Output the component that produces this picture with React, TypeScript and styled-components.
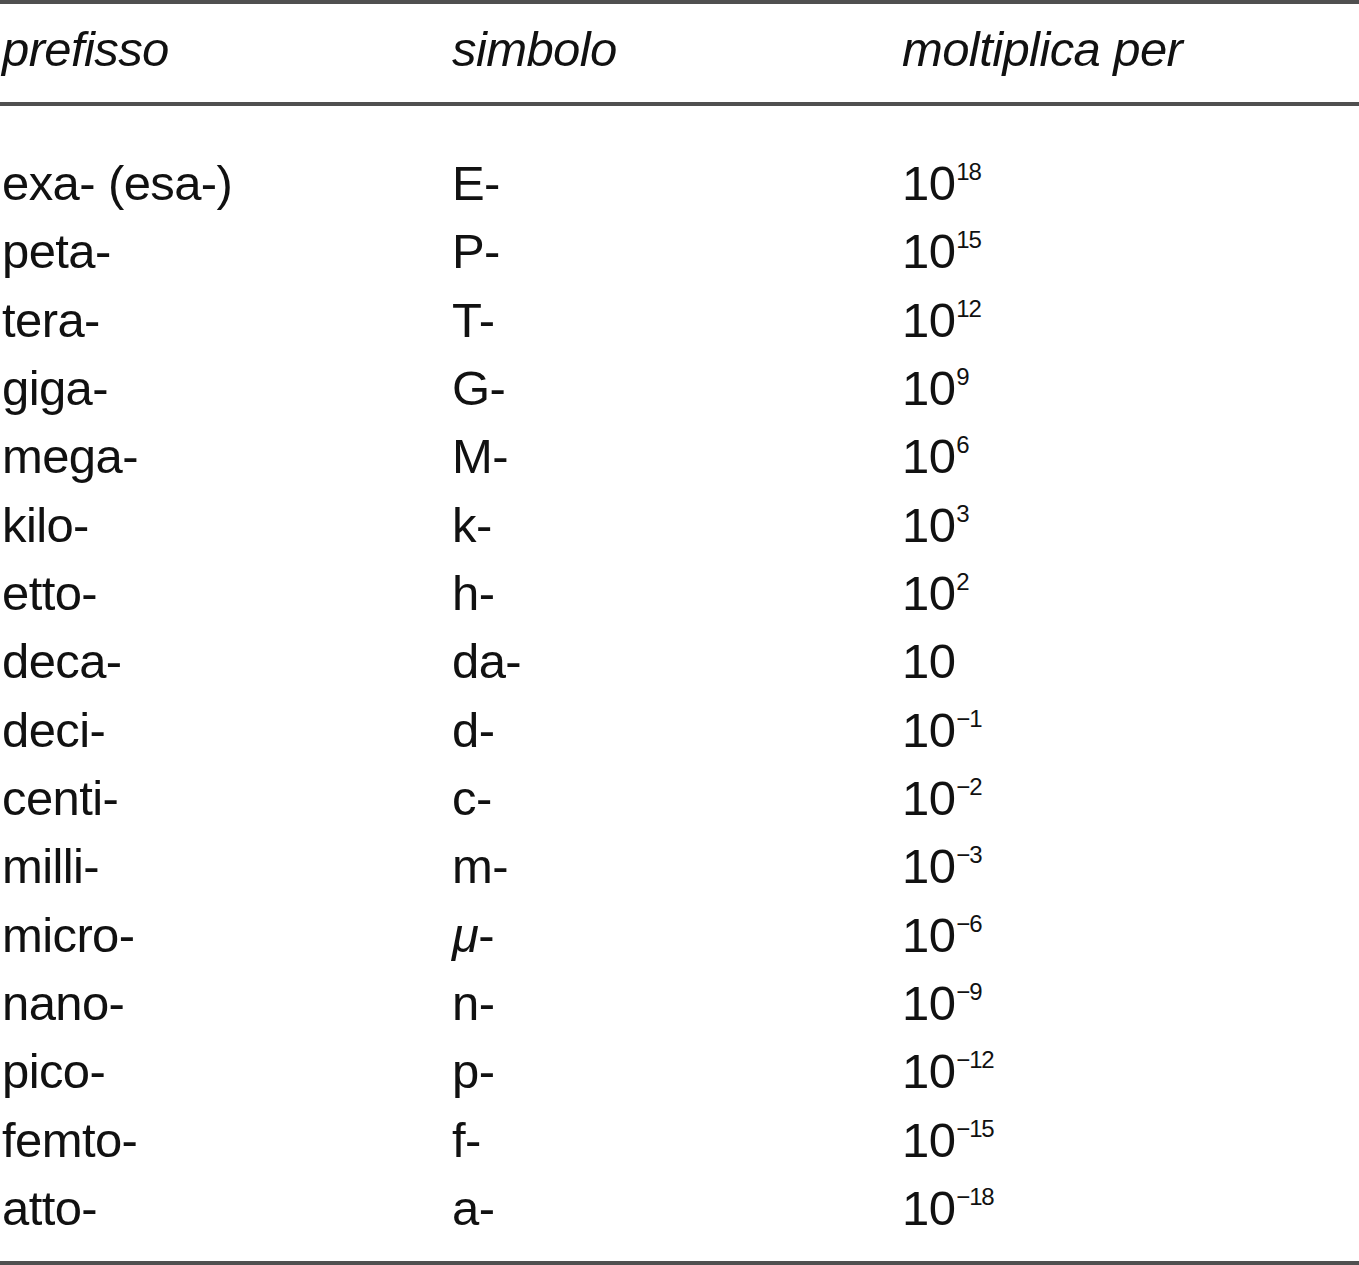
import React from "react";
import styled, { createGlobalStyle } from "styled-components";

const Global = createGlobalStyle`
  html, body { margin: 0; padding: 0; background: #ffffff; }
  body { font-family: "Liberation Sans", Arial, Helvetica, sans-serif; color: #111111; }
`;

const Table = styled.div`
  width: 1359px;
  border-top: 4px solid #505050;
  border-bottom: 4px solid #505050;
`;

const HeaderRow = styled.div`
  display: grid;
  grid-template-columns: 450px 450px 1fr;
  height: 102px;
  box-sizing: border-box;
  padding-top: 15px;
  border-bottom: 4px solid #505050;
`;

const HeadCell = styled.div`
  font-size: 49px;
  line-height: 60px;
  font-style: italic;
  letter-spacing: -0.6px;
  padding-left: 2px;
`;

const Body = styled.div`
  padding: 43px 0 19px;
`;

const Row = styled.div`
  display: grid;
  grid-template-columns: 450px 450px 1fr;
  height: 68.33px;
`;

const Cell = styled.div`
  font-size: 49px;
  line-height: 68.33px;
  letter-spacing: -0.6px;
  white-space: nowrap;
  padding-left: 2px;
`;

const Sup = styled.span`
  font-size: 24px;
  letter-spacing: -1.2px;
  line-height: 0;
  vertical-align: 20px;
  margin-left: 1px;
`;

const Greek = styled.span`
  font-style: italic;
`;

type Item = { prefix: string; symbol: React.ReactNode; exp: string | null };

const rows: Item[] = [
  { prefix: "exa- (esa-)", symbol: "E-", exp: "18" },
  { prefix: "peta-", symbol: "P-", exp: "15" },
  { prefix: "tera-", symbol: "T-", exp: "12" },
  { prefix: "giga-", symbol: "G-", exp: "9" },
  { prefix: "mega-", symbol: "M-", exp: "6" },
  { prefix: "kilo-", symbol: "k-", exp: "3" },
  { prefix: "etto-", symbol: "h-", exp: "2" },
  { prefix: "deca-", symbol: "da-", exp: null },
  { prefix: "deci-", symbol: "d-", exp: "\u22121" },
  { prefix: "centi-", symbol: "c-", exp: "\u22122" },
  { prefix: "milli-", symbol: "m-", exp: "\u22123" },
  { prefix: "micro-", symbol: <><Greek>μ</Greek>-</>, exp: "\u22126" },
  { prefix: "nano-", symbol: "n-", exp: "\u22129" },
  { prefix: "pico-", symbol: "p-", exp: "\u221212" },
  { prefix: "femto-", symbol: "f-", exp: "\u221215" },
  { prefix: "atto-", symbol: "a-", exp: "\u221218" },
];

export default function App() {
  return (
    <>
      <Global />
      <Table>
        <HeaderRow>
          <HeadCell>prefisso</HeadCell>
          <HeadCell>simbolo</HeadCell>
          <HeadCell>moltiplica per</HeadCell>
        </HeaderRow>
        <Body>
          {rows.map((r) => (
            <Row key={r.prefix}>
              <Cell>{r.prefix}</Cell>
              <Cell>{r.symbol}</Cell>
              <Cell>
                10{r.exp !== null && <Sup>{r.exp}</Sup>}
              </Cell>
            </Row>
          ))}
        </Body>
      </Table>
    </>
  );
}
